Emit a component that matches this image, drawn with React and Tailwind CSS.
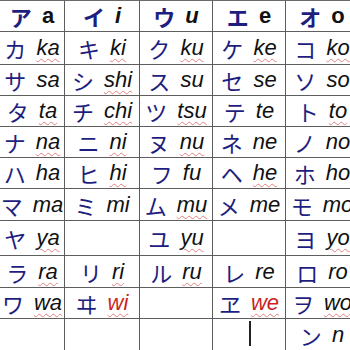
import React from "react";

const rows = [
  {
    h: "h-[31px]",
    head: true,
    cells: [
      ["ア", "a", "n"],
      ["イ", "i", "i"],
      ["ウ", "u", "i"],
      ["エ", "e", "n"],
      ["オ", "o", "n"],
    ],
  },
  {
    h: "h-[33px]",
    cells: [
      ["カ", "ka", "w"],
      ["キ", "ki", "w"],
      ["ク", "ku", "w"],
      ["ケ", "ke", "w"],
      ["コ", "ko", "w"],
    ],
  },
  {
    h: "h-[31px]",
    cells: [
      ["サ", "sa"],
      ["シ", "shi", "w"],
      ["ス", "su"],
      ["セ", "se"],
      ["ソ", "so"],
    ],
  },
  {
    h: "h-[31px]",
    cells: [
      ["タ", "ta", "w"],
      ["チ", "chi", "w"],
      ["ツ", "tsu", "w"],
      ["テ", "te"],
      ["ト", "to", "w"],
    ],
  },
  {
    h: "h-[31px]",
    cells: [
      ["ナ", "na", "w"],
      ["ニ", "ni", "w"],
      ["ヌ", "nu", "w"],
      ["ネ", "ne"],
      ["ノ", "no"],
    ],
  },
  {
    h: "h-[31px]",
    cells: [
      ["ハ", "ha"],
      ["ヒ", "hi", "w"],
      ["フ", "fu"],
      ["ヘ", "he", "w"],
      ["ホ", "ho"],
    ],
  },
  {
    h: "h-[32px]",
    cells: [
      ["マ", "ma"],
      ["ミ", "mi"],
      ["ム", "mu", "w"],
      ["メ", "me"],
      ["モ", "mo"],
    ],
  },
  {
    h: "h-[35px]",
    cells: [
      ["ヤ", "ya", "w"],
      null,
      ["ユ", "yu", "w"],
      null,
      ["ヨ", "yo", "w"],
    ],
  },
  {
    h: "h-[32px]",
    cells: [
      ["ラ", "ra", "w"],
      ["リ", "ri", "w"],
      ["ル", "ru", "w"],
      ["レ", "re"],
      ["ロ", "ro"],
    ],
  },
  {
    h: "h-[31px]",
    cells: [
      ["ワ", "wa", "w"],
      ["ヰ", "wi", "r"],
      null,
      ["ヱ", "we", "r"],
      ["ヲ", "wo", "w"],
    ],
  },
  {
    h: "h-[31px]",
    last: true,
    cells: [null, null, null, "cursor", ["ン", "n"]],
  },
];

const widths = ["w-[65px]", "w-[75px]", "w-[73px]", "w-[73px]", "w-[73px]"];

function Cell({ cell, head }) {
  if (cell === "cursor") {
    return (
      <div className="h-full pl-[36px] pt-[2px]">
        <div className="w-[2px] h-[25px] bg-[#222]" />
      </div>
    );
  }
  if (!cell) return null;
  const [kana, roma, mode] = cell;
  let romaClass = "italic text-[#111]";
  if (head) {
    romaClass = mode === "i" ? "italic font-bold text-[#111]" : "font-bold text-[#111]";
  }
  if (mode === "w") {
    romaClass += " underline decoration-wavy decoration-[#e58080] decoration-1 underline-offset-[3px]";
  }
  if (mode === "r") {
    romaClass = "italic text-[#cc1f1f] underline decoration-wavy decoration-[#e58080] decoration-1 underline-offset-[3px]";
  }
  return (
    <div className="h-full flex items-center justify-center gap-[10px]">
      <span
        className={`text-[22px] leading-none text-[#1e1e80] ${head ? "font-bold" : ""}`}
        style={{ fontFamily: '"Noto Sans CJK JP", sans-serif' }}
      >
        {kana}
      </span>
      <span
        className={`text-[22px] leading-none ${romaClass}`}
        style={{ fontFamily: '"Liberation Sans", Arial, sans-serif' }}
      >
        {roma}
      </span>
    </div>
  );
}

export default function App() {
  return (
    <div className="w-[350px] h-[350px] overflow-hidden bg-white">
      <div className="w-[400px] flex flex-col border-t border-[#6a6a6a]">
        {rows.map((row, i) => (
          <div
            key={i}
            className={`flex shrink-0 ${row.h} ${row.last ? "" : "border-b border-[#5e5e5e]"}`}
          >
            {row.cells.map((c, j) => (
              <div key={j} className={`${widths[j]} shrink-0 border-r border-[#5e5e5e]`}>
                <Cell cell={c} head={row.head} />
              </div>
            ))}
          </div>
        ))}
      </div>
    </div>
  );
}
